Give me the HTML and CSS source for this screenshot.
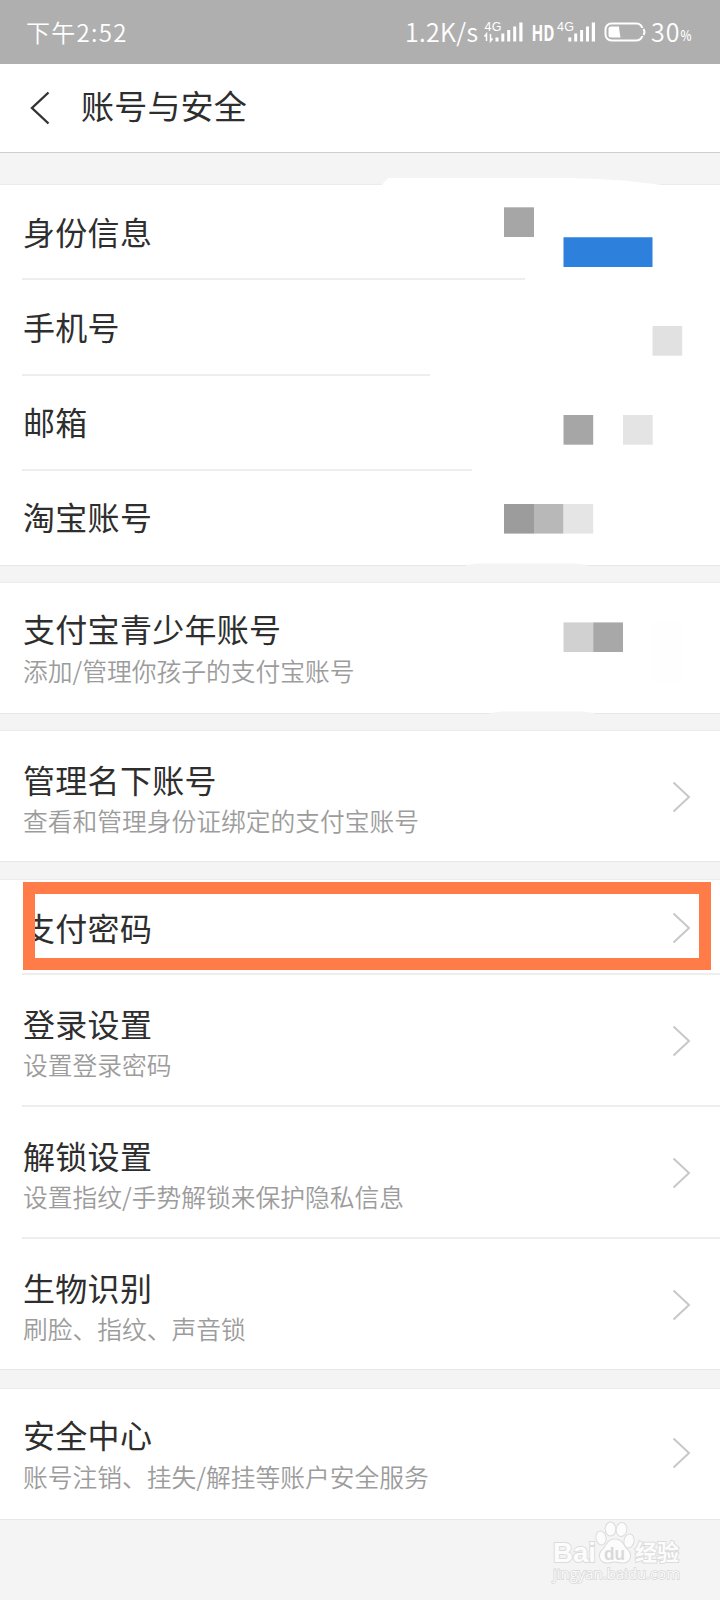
FILE: index.html
```html
<!DOCTYPE html>
<html lang="zh-CN">
<head>
<meta charset="utf-8">
<title>账号与安全</title>
<link rel="stylesheet" href="styles.css">
</head>
<body>
<div class="screen">
  <div class="status">
    <span class="clock">下午2:52</span>
    <svg class="status-icons" width="300" height="64" viewBox="400 0 300 64" fill="#fff">
      <text x="405" y="41.5" font-size="25" textLength="73" class="thin">1.2K/s</text>
      <text x="484.500" y="30.500" font-size="12.500" textLength="17" class="small">4G</text>
      <path d="M486.500 41v-7l-2 2.500M490.500 34v7l2-2.500" fill="none" stroke="#fff" stroke-width="1.500"/>
      <path d="M495.500 37.500h3v4h-3zM501.300 33.500h3v8h-3zM507.200 30h3v11.500h-3zM513.200 26.500h3v15h-3zM519.300 22.500h3.200v19h-3.200z"/>
      <text x="531.500" y="40.500" font-size="21" textLength="23" lengthAdjust="spacingAndGlyphs" class="bold">HD</text>
      <text x="557" y="30.500" font-size="12.500" textLength="17" class="small">4G</text>
      <path d="M568.300 37.500h3v4h-3zM574.200 33.500h3v8h-3zM580.100 30h3v11.500h-3zM586 26.500h3v15h-3zM591.800 22.500h3.200v19h-3.200z"/>
      <rect x="605.500" y="23.500" width="37" height="17" rx="6" fill="none" stroke="#fff" stroke-width="2"/>
      <path d="M642.500 28v8" stroke="#afafaf" stroke-width="4"/>
      <path d="M643.500 29q2 3 0 6" fill="none" stroke="#fff" stroke-width="2"/>
      <path d="M611 26.500h8q.5 6 1.500 11H611q-2.500 0-2.500-2.500v-6q0-2.500 2.500-2.500z"/>
      <text x="651" y="41.500" font-size="25" textLength="28.500" class="thin">30</text>
      <text x="680.500" y="41" font-size="15" textLength="11" lengthAdjust="spacingAndGlyphs" class="percent">%</text>
    </svg>
  </div>
  <header class="header">
    <svg class="back" width="20" height="34" viewBox="0 0 20 34"><path d="M18.500 1.500L2 17l16.500 15.500" fill="none" stroke="#333" stroke-width="2.400"/></svg>
    <h1 class="heading">账号与安全</h1>
  </header>

  <section class="group first">
    <div class="row single cut-a"><span class="title">身份信息</span></div>
    <div class="row single cut-b"><span class="title">手机号</span></div>
    <div class="row single cut-c"><span class="title">邮箱</span></div>
    <div class="row single last"><span class="title">淘宝账号</span></div>
  </section>

  <section class="group">
    <div class="row double high last"><div class="label"><span class="title">支付宝青少年账号</span><span class="sub">添加/管理你孩子的支付宝账号</span></div></div>
  </section>

  <section class="group">
    <div class="row double last"><div class="label"><span class="title">管理名下账号</span><span class="sub">查看和管理身份证绑定的支付宝账号</span></div><svg class="arrow" viewBox="0 0 20 32"><path d="M1.500 1.500L17 16 1.500 30.500"/></svg></div>
  </section>

  <section class="group login">
    <div class="row single pay"><span class="title">支付密码</span><svg class="arrow" viewBox="0 0 20 32"><path d="M1.500 1.500L17 16 1.500 30.500"/></svg><div class="highlight"></div></div>
    <div class="row double"><div class="label"><span class="title">登录设置</span><span class="sub">设置登录密码</span></div><svg class="arrow" viewBox="0 0 20 32"><path d="M1.500 1.500L17 16 1.500 30.500"/></svg></div>
    <div class="row double"><div class="label"><span class="title">解锁设置</span><span class="sub">设置指纹/手势解锁来保护隐私信息</span></div><svg class="arrow" viewBox="0 0 20 32"><path d="M1.500 1.500L17 16 1.500 30.500"/></svg></div>
    <div class="row double last"><div class="label"><span class="title">生物识别</span><span class="sub">刷脸、指纹、声音锁</span></div><svg class="arrow" viewBox="0 0 20 32"><path d="M1.500 1.500L17 16 1.500 30.500"/></svg></div>
  </section>

  <section class="group center">
    <div class="row double high last"><div class="label"><span class="title">安全中心</span><span class="sub">账号注销、挂失/解挂等账户安全服务</span></div><svg class="arrow" viewBox="0 0 20 32"><path d="M1.500 1.500L17 16 1.500 30.500"/></svg></div>
  </section>

  <!-- Redaction blocks over the private values -->
  <svg class="mosaic" width="360" height="560" viewBox="360 160 360 560">
    <path d="M381 186l7-8h182q50 1 92 7v1z" fill="#fff"/>
    <path d="M466 565l12-1.500h97l12 1.500v1h-121zM490 713l12-1.500h80l12 1.500v1h-104z" fill="#f4f4f4"/>
    <path d="M504 207.300h30V237h-30z" fill="#a6a6a6"/>
    <path d="M563.500 237.200h89v29.700h-89z" fill="#2d80dc"/>
    <path d="M652.500 326h29.700v29.700h-29.700z" fill="#e1e1e1"/>
    <path d="M563.500 415h29.700v29.700h-29.700z" fill="#a6a6a6"/>
    <path d="M623 415h29.700v29.700H623z" fill="#e4e4e4"/>
    <path d="M504 504h30v29.600h-30z" fill="#9c9c9c"/>
    <path d="M534 504h29.600v29.600H534z" fill="#b8b8b8"/>
    <path d="M563.600 504h29.600v29.600h-29.600z" fill="#e5e5e5"/>
    <path d="M563.500 622.400h29.700V652h-29.700z" fill="#d1d1d1"/>
    <path d="M593.200 622.400H623V652h-29.800z" fill="#a8a8a8"/>
    <path d="M652.500 622.400h29.700v60h-29.700z" fill="#fefefe"/>
  </svg>

  <svg class="watermark" width="150" height="70" viewBox="540 1518 150 70">
    <g fill="#fcfcfc" stroke="#dcdcdc" stroke-width="2" paint-order="stroke">
      <text x="553" y="1562" font-size="28" textLength="43" lengthAdjust="spacingAndGlyphs" class="mark">Bai</text>
      <ellipse cx="601" cy="1538" rx="4.500" ry="6.500" transform="rotate(-12 601 1538)"/>
      <ellipse cx="610.500" cy="1529" rx="4.800" ry="6.500"/>
      <ellipse cx="621.500" cy="1529.500" rx="4.800" ry="6.500" transform="rotate(8 621.5 1529.5)"/>
      <ellipse cx="629" cy="1541" rx="4.500" ry="6.500" transform="rotate(12 629 1541)"/>
      <path d="M615 1539.500c-7 0-8 6-12 10-5 4-4 13 4 13 4 0 5-1 8-1s4 1 8 1c8 0 9-9 4-13-4-4-5-10-12-10z"/>
      <text x="635" y="1560" font-size="22" textLength="44" class="mark">经验</text>
    </g>
    <text x="553" y="1579" font-size="15" textLength="127" lengthAdjust="spacingAndGlyphs" class="url">jingyan.baidu.com</text>
    <text x="604" y="1560" font-size="19" textLength="21" lengthAdjust="spacingAndGlyphs" class="mark" fill="#d9d9d9">du</text>
  </svg>
</div>
</body>
</html>
```
FILE: styles.css
```css
* { box-sizing: border-box; }
body {
  margin: 0;
  background: #f4f4f4;
  font-family: "Noto Sans CJK SC", "Noto Sans", sans-serif;
  color: #2e2e2e;
}
.screen {
  position: relative;
  width: 720px;
  height: 1600px;
  overflow: hidden;
}
.status {
  height: 64px;
  padding: 0 20px 0 26px;
  display: flex;
  justify-content: space-between;
  align-items: center;
  background: #afafaf;
  color: #fff;
}
.clock { font-size: 24px; line-height: 64px; height: 64px; font-weight: 350; letter-spacing: 1.3px; }
.thin { font-weight: 350; }
.small { font-family: "Liberation Sans", sans-serif; }
.percent { font-weight: 500; }
.bold { font-weight: 700; }
.header {
  height: 89px;
  padding-left: 30px;
  display: flex;
  align-items: center;
  gap: 31px;
  background: #fff;
  border-bottom: 1px solid #cecece;
}
.back { flex: none; margin-top: -1px; }
.heading { margin: 0 0 6px; font-size: 33px; line-height: 40px; font-weight: 400; letter-spacing: 0.2px; }
.group {
  margin-top: 16px;
  background: #fff;
  border-top: 1px solid #ececec;
  border-bottom: 1px solid #e8e8e8;
}
.group.first { margin-top: 31px; }
.group.login { margin-top: 17px; }
.group.center { margin-top: 18px; }
.row {
  position: relative;
  display: flex;
  justify-content: space-between;
  padding: 0 28px 0 23px;
}
.row::after {
  content: "";
  position: absolute;
  left: 22px;
  right: 0;
  bottom: 0;
  height: 2px;
  background: #eee;
}
.row.last::after { display: none; }
.cut-a::after { right: 195px; }
.cut-b::after { right: 290px; bottom: -1px; }
.cut-c::after { right: 248px; bottom: -1px; }
.single { height: 95px; align-items: center; padding-bottom: 4px; }
.double { height: 132px; padding-top: 28px; }
.double.last { height: 130px; }
.double.high { padding-top: 25px; }
.pay { padding-bottom: 0; }
.pay .title { margin-top: -2px; }
.label { display: flex; flex-direction: column; gap: 3px; }
.high .label { gap: 4px; }
.title { font-size: 32px; line-height: 40px; letter-spacing: 0.3px; }
.sub { font-size: 24.75px; line-height: 36px; color: #9c9c9c; font-weight: 350; }
.arrow {
  flex: none;
  width: 20px;
  height: 32px;
  fill: none;
  stroke: #c8c8c8;
  stroke-width: 2;
}
.double .arrow { margin-top: 22px; }
.double.high .arrow { margin-top: 23px; }
.highlight {
  position: absolute;
  left: 23px;
  top: 2px;
  z-index: 1;
  width: 688px;
  height: 88px;
  border: 12.500px solid #ff7b47;
}
.mosaic { position: absolute; left: 360px; top: 160px; }
.watermark { position: absolute; left: 540px; top: 1518px; }
.mark { font-weight: 700; font-family: "Liberation Sans", "Noto Sans CJK SC", sans-serif; }
.url { font-family: "Open Sans", sans-serif; fill: #fafafa; stroke: #d8d8d8; stroke-width: 1.5px; paint-order: stroke; }
```
